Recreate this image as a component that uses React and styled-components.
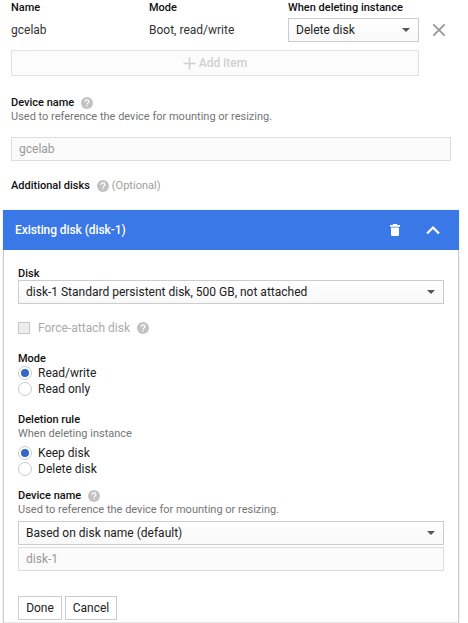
import React, { useState } from 'react'
import styled, { createGlobalStyle } from 'styled-components'

const GlobalStyle = createGlobalStyle`
    * {
        box-sizing: border-box;
    }

    body {
        margin: 0;
        background: #fff;
        color: #212121;
        font-family: Roboto, "Liberation Sans", sans-serif;
        font-size: 12px;
        line-height: 16px;
        overflow: hidden;
    }
`;

const Page = styled.div`
    width: 468px;
    height: 623px;
    overflow: hidden;
    display: flex;
    flex-direction: column;
`;

const TopForm = styled.div`
    padding: 0 17px 0 11px;
    display: flex;
    flex-direction: column;
`;

const DiskTable = styled.div`
    display: grid;
    grid-template-columns: 138px 139px 131px 1fr;
    grid-template-rows: 15px 24px;
    row-gap: 3px;
    align-items: center;
`;

const Label = styled.div`
    display: flex;
    align-items: center;
    height: 14px;
    font-size: 11px;
    line-height: 14px;
    font-weight: 500;
    color: #111;
    white-space: nowrap;
    margin-top: ${props => props.$top || 0}px;

    svg {
        margin-left: 7px;
    }
`;

const TableHead = styled(Label)`
    height: 15px;
    padding-top: 1px;
`;

const Optional = styled.span`
    color: #a0a0a0;
    font-weight: 400;
    margin-left: 3px;
`;

const Hint = styled.div`
    height: 14px;
    font-size: 11px;
    line-height: 14px;
    color: #757575;
    white-space: nowrap;
`;

const Cell = styled.div`
    white-space: nowrap;
    color: #333;
`;

const SelectBox = styled.button`
    display: flex;
    align-items: center;
    justify-content: space-between;
    width: 100%;
    height: 24px;
    margin: ${props => props.$top || 0}px 0 0;
    padding: 0 8px 0 7px;
    border: 1px solid #ccc;
    background: linear-gradient(#fff, #f8f8f8);
    color: #212121;
    font: inherit;
    white-space: nowrap;

    &::after {
        content: '';
        border: 4px solid transparent;
        border-top-color: #555;
        border-bottom: 0;
    }
`;

const RemoveBtn = styled.div`
    display: flex;
    margin-left: 13px;
    color: #999;
`;

const AddItem = styled.button`
    display: flex;
    align-items: center;
    justify-content: center;
    gap: 3px;
    width: 408px;
    height: 26px;
    margin-top: 8px;
    padding: 0;
    border: 1px solid #e2e2e2;
    background: #fcfcfc;
    color: #d0d0d0;
    font: inherit;
    font-weight: 500;
`;

const TextInput = styled.input`
    width: 100%;
    height: 24px;
    margin: ${props => props.$top}px 0 0;
    padding: 0 7px;
    border: 1px solid #ddd;
    border-radius: 0;
    outline: none;
    background: #fbfbfb;
    color: #999;
    font: inherit;
`;

const Panel = styled.div`
    width: 456px;
    height: 413px;
    margin: 17px 0 0 3px;
    border: 1px solid #ccc;
    border-width: 0 1px;
    box-shadow: 0 0 2px rgba(0, 0, 0, .15);
`;

const PanelHeader = styled.div`
    display: flex;
    align-items: center;
    height: 40px;
    margin: 0 -1px;
    padding: 0 19px 0 12px;
    background: #3b78e7;
    color: #fff;
    font-weight: 500;
    letter-spacing: -.08px;

    span {
        flex: 1;
    }
`;

const PanelBody = styled.div`
    display: flex;
    flex-direction: column;
    height: 373px;
    padding: 17px 14px 0;
    border-bottom: 1px solid #e8e8e8;
`;

const CheckRow = styled.div`
    display: flex;
    align-items: center;
    height: 16px;
    margin-top: 16px;
    color: #aaa;

    svg {
        margin-left: 7px;
    }
`;

const CheckBox = styled.div`
    width: 12px;
    height: 12px;
    margin-right: 8px;
    border: 1px solid #c8c8c8;
    background: #eee;
`;

const RadioRow = styled.div`
    display: flex;
    align-items: center;
    height: 16px;
    cursor: pointer;
`;

const RadioDot = styled.div`
    display: flex;
    align-items: center;
    justify-content: center;
    width: 14px;
    height: 14px;
    margin-right: 6px;
    border: 1px solid #ccc;
    border-radius: 50%;

    &::after {
        content: '';
        width: 8px;
        height: 8px;
        border-radius: 50%;
        background: ${props => props.$on ? '#3367c6' : 'transparent'};
    }
`;

const RadioList = styled.div`
    margin-top: ${props => props.$top || 0}px;
`;

const Buttons = styled.div`
    display: flex;
    gap: 3px;
    margin-top: 25px;
`;

const Button = styled.button`
    width: ${props => props.$width}px;
    height: 24px;
    padding: 0;
    border: 1px solid #ccc;
    background: #fff;
    color: #212121;
    font: inherit;
`;

const HelpIcon = () => (
    <svg width="12" height="12" viewBox="0 0 12 12">
        <circle cx="6" cy="6" r="6" fill="#c2c2c2"/>
        <path d="M4.1 4.8C4.1 3.6 4.9 2.9 6 2.9S7.9 3.6 7.9 4.7C7.9 6 6 6 6 7.4M6 8.2V9.5" fill="none" stroke="#fff" strokeWidth="1.2"/>
    </svg>
)

const CloseIcon = () => (
    <svg width="14" height="14" viewBox="0 0 14 14">
        <path d="M1.3 1.3l11.4 11.4M12.7 1.3L1.3 12.7" fill="none" stroke="currentColor" strokeWidth="1.9"/>
    </svg>
)

const PlusIcon = () => (
    <svg width="13" height="13" viewBox="0 0 13 13">
        <path d="M6.5 .5v12M.5 6.5h12" fill="none" stroke="currentColor" strokeWidth="1.7"/>
    </svg>
)

const TrashIcon = () => (
    <svg width="10" height="12" viewBox="0 0 10 12">
        <path d="M0 1h2.6l.7-1h3.4l.7 1H10v1.7H0zM1 3.6h8v6.9Q9 12 7.6 12H2.4Q1 12 1 10.5z" fill="#fff"/>
    </svg>
)

const ChevronIcon = () => (
    <svg width="14" height="10" viewBox="0 0 14 10">
        <path d="M1 8.5l6-6 6 6" fill="none" stroke="#fff" strokeWidth="2.2"/>
    </svg>
)

const HeaderIcons = styled.div`
    display: flex;
    align-items: center;
    gap: 26px;
`;

function Radios({ options, top }) {
    const [selected, setSelected] = useState(options[0])

    return (
        <RadioList $top={top}>
            {options.map(option => (
                <RadioRow key={option} onClick={() => setSelected(option)}>
                    <RadioDot $on={option === selected}/>
                    {option}
                </RadioRow>
            ))}
        </RadioList>
    )
}

export default function App() {
    return (
        <Page>
            <GlobalStyle/>

            <TopForm>
                <DiskTable>
                    <TableHead>Name</TableHead>
                    <TableHead>Mode</TableHead>
                    <TableHead>When deleting instance</TableHead>
                    <span/>
                    <Cell>gcelab</Cell>
                    <Cell>Boot, read/write</Cell>
                    <SelectBox>Delete disk</SelectBox>
                    <RemoveBtn><CloseIcon/></RemoveBtn>
                </DiskTable>

                <AddItem><PlusIcon/>Add item</AddItem>

                <Label $top={20}>Device name<HelpIcon/></Label>
                <Hint>Used to reference the device for mounting or resizing.</Hint>
                <TextInput $top={13} value="gcelab" readOnly/>

                <Label $top={18}>Additional disks<HelpIcon/><Optional>(Optional)</Optional></Label>
            </TopForm>

            <Panel>
                <PanelHeader>
                    <span>Existing disk (disk-1)</span>
                    <HeaderIcons>
                        <TrashIcon/>
                        <ChevronIcon/>
                    </HeaderIcons>
                </PanelHeader>

                <PanelBody>
                    <Label>Disk</Label>
                    <SelectBox $top={-1}>disk-1 Standard persistent disk, 500 GB, not attached</SelectBox>

                    <CheckRow><CheckBox/>Force-attach disk<HelpIcon/></CheckRow>

                    <Label $top={16}>Mode</Label>
                    <Radios top={-1} options={['Read/write', 'Read only']}/>

                    <Label $top={16}>Deletion rule</Label>
                    <Hint>When deleting instance</Hint>
                    <Radios top={4} options={['Keep disk', 'Delete disk']}/>

                    <Label $top={12}>Device name<HelpIcon/></Label>
                    <Hint>Used to reference the device for mounting or resizing.</Hint>
                    <SelectBox $top={4}>Based on disk name (default)</SelectBox>
                    <TextInput $top={2} value="disk-1" readOnly/>

                    <Buttons>
                        <Button $width={44}>Done</Button>
                        <Button $width={52}>Cancel</Button>
                    </Buttons>
                </PanelBody>
            </Panel>
        </Page>
    )
}
